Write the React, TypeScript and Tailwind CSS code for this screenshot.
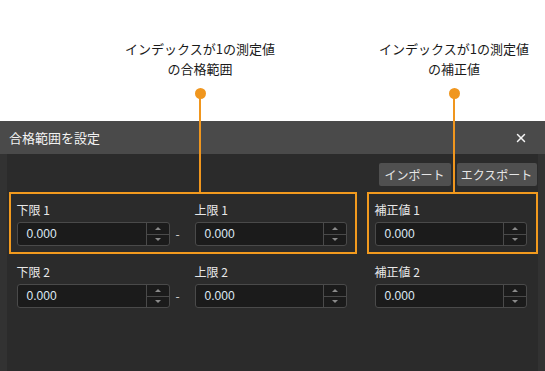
import { X } from "lucide-react";

const jp = { fontFamily: '"Noto Sans CJK JP", "Noto Sans", sans-serif' };

function SpinInput({ width }: { width: string }) {
    return (
        <div className={`${width} h-[24px] flex rounded-[3px] border border-[#4a4a4a] bg-[#1b1b1b]`}>
            <div className="flex-1 flex items-center pl-[9px] text-[12px] text-[#dfe9f5]" style={{ fontFamily: '"Liberation Sans", sans-serif' }}>
                0.000
            </div>
            <div className="w-[23px] flex flex-col border-l border-[#4a4a4a]">
                <div className="flex-1 flex items-center justify-center border-b border-[#4a4a4a]">
                    <div className="w-0 h-0 border-l-[3px] border-r-[3px] border-b-[3px] border-l-transparent border-r-transparent border-b-[#8a8a8a]" />
                </div>
                <div className="flex-1 flex items-center justify-center">
                    <div className="w-0 h-0 border-l-[3px] border-r-[3px] border-t-[3px] border-l-transparent border-r-transparent border-t-[#8a8a8a]" />
                </div>
            </div>
        </div>
    );
}

function Field({ label, width }: { label: string; width: string }) {
    return (
        <div className="flex flex-col">
            <div className="h-[16px] leading-[16px] text-[12px] text-[#e8e8e8] mb-[4px]">{label}</div>
            <SpinInput width={width} />
        </div>
    );
}

function Row({ n, highlight }: { n: number; highlight: boolean }) {
    const border = highlight ? 'border-[#f29a1e]' : 'border-transparent';
    return (
        <div className="flex gap-[10px]">
            <div className={`w-[348px] border-2 ${border} pt-[8px] pb-[6px] pl-[6px] flex items-end`}>
                <Field label={`下限 ${n}`} width="w-[153px]" />
                <div className="w-[25px] h-[24px] flex items-center pl-[6px] text-[12px] text-[#dddddd]">-</div>
                <Field label={`上限 ${n}`} width="w-[152px]" />
            </div>
            <div className={`w-[171px] border-2 ${border} pt-[8px] pb-[6px] pl-[6px]`}>
                <Field label={`補正値 ${n}`} width="w-[152px]" />
            </div>
        </div>
    );
}

function Callout({ x, lines }: { x: number; lines: string[] }) {
    return (
        <>
            <div className="absolute top-[39px] w-[220px] text-center text-[13px] leading-[20px] text-[#1a1a1a]" style={{ left: x - 110 }}>
                {lines.map((l) => (
                    <div key={l}>{l}</div>
                ))}
            </div>
            <div className="absolute top-[88px] w-[11px] h-[11px] rounded-full bg-[#f0961e]" style={{ left: x - 5 }} />
            <div className="absolute top-[95px] w-[2px] h-[97px] bg-[#f0961e]" style={{ left: x - 1 }} />
        </>
    );
}

export default function App() {
    return (
        <div className="relative w-[545px] h-[371px] bg-white overflow-hidden" style={jp}>
            <div className="h-[121px]" />

            <div className="h-[250px] flex flex-col">
                {/* タイトルバー */}
                <div className="h-[33px] bg-[#4a4a4a] flex items-center justify-between pl-[9px] pr-[17px]">
                    <span className="text-[13px] text-[#f2f2f2]">合格範囲を設定</span>
                    <X size={14} strokeWidth={2.5} color="#f5f5f5" />
                </div>

                {/* 本体 */}
                <div className="flex-1 flex bg-[#2b2b2b]">
                    <div className="w-[7px] bg-[#323232]" />
                    <div className="flex-1 flex flex-col pt-[9px] pl-[2px]">
                        <div className="flex justify-end gap-[6px] pr-[1px] mb-[6px]">
                            <button className="w-[72px] h-[23px] rounded-[2px] bg-[#505050] text-[12px] text-[#e6e6e6]">インポート</button>
                            <button className="w-[80px] h-[23px] rounded-[2px] bg-[#505050] text-[12px] text-[#e6e6e6]">エクスポート</button>
                        </div>
                        <Row n={1} highlight />
                        <Row n={2} highlight={false} />
                    </div>
                    <div className="w-[8px] bg-[#323232]" />
                </div>
            </div>

            <Callout x={200} lines={["インデックスが1の測定値", "の合格範囲"]} />
            <Callout x={454} lines={["インデックスが1の測定値", "の補正値"]} />
        </div>
    );
}
